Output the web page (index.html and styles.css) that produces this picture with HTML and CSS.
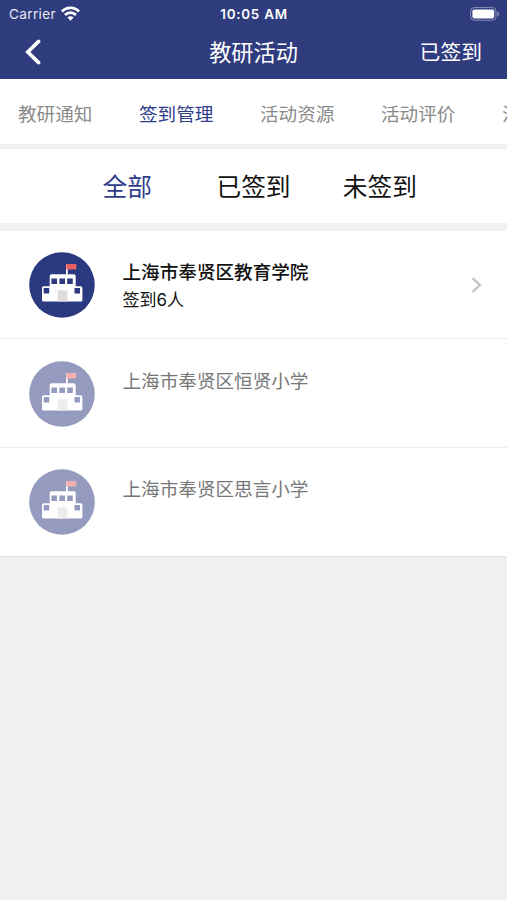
FILE: index.html
```html
<!DOCTYPE html>
<html lang="zh-CN">
<head>
<meta charset="utf-8">
<title>教研活动</title>
<link rel="stylesheet" href="styles.css">
</head>
<body>
<svg class="defs" aria-hidden="true">
  <symbol id="school" viewBox="0 0 66 66">
    <circle cx="33" cy="33" r="32.8" fill="#2b3a80"/>
    <path d="M37 12.4h1.8v10.4H37z" fill="#fff"/>
    <path d="M37.3 12h10v5.5h-10z" fill="#e8605f"/>
    <rect x="20.7" y="22.3" width="26" height="20" rx="2" fill="#fff"/>
    <rect x="13" y="34.3" width="40.4" height="15.2" rx="1.6" fill="#fff"/>
    <path d="M22.4 26.4H28V32h-5.6zM30.4 26.4H36V32h-5.6zM38.2 26.4h5.6V32h-5.6zM14.7 36h5.5v5.5h-5.5zM45.5 36H51v5.5h-5.5z" fill="#2b3a80"/>
    <rect x="28.6" y="38.3" width="9.8" height="11.2" fill="#ddd"/>
  </symbol>
</svg>
<header class="header">
  <div class="status">
    <span class="carrier">Carrier
      <svg class="wifi" width="19" height="15" viewBox="0 0 18 14" fill="none" stroke="#fff" stroke-width="2.6">
        <path d="M.9 5.1a11.5 11.5 0 0 1 16.2 0"/>
        <path d="M3.8 8.4a7.3 7.3 0 0 1 10.4 0"/>
        <path d="M9 13.8 6.1 10.9a4.1 4.1 0 0 1 5.8 0z" fill="#fff" stroke="none"/>
      </svg>
    </span>
    <span class="time">10:05 AM</span>
    <svg class="battery" width="30" height="14" viewBox="0 0 30 14">
      <rect x=".6" y=".6" width="25.4" height="12.6" rx="3.6" fill="none" stroke="#8b93bb"/>
      <rect x="2.4" y="2.4" width="21.8" height="9" rx="1.8" fill="#fff"/>
      <path d="M27.4 4.6q2 1 2 2.4t-2 2.4z" fill="#8b93bb"/>
    </svg>
  </div>
  <nav class="navbar">
    <svg class="back" width="18" height="28" viewBox="0 0 18 28" fill="none" stroke="#fff" stroke-width="3.6" stroke-linecap="round" stroke-linejoin="miter"><path d="M14.6 2.4 3.8 13l10.8 10.6"/></svg>
    <h1 class="title">教研活动</h1>
    <span class="action">已签到</span>
  </nav>
</header>
<nav class="tabs">
  <a class="tab">教研通知</a>
  <a class="tab active">签到管理</a>
  <a class="tab">活动资源</a>
  <a class="tab">活动评价</a>
  <a class="tab">活动总结</a>
</nav>
<div class="filters">
  <a class="filter active">全部</a>
  <a class="filter">已签到</a>
  <a class="filter">未签到</a>
</div>
<ul class="list">
  <li class="row signed">
    <svg class="avatar"><use href="#school"/></svg>
    <div class="info">
      <div class="name">上海市奉贤区教育学院</div>
      <div class="count">签到6人</div>
    </div>
    <svg class="chevron" width="12" height="18" viewBox="0 0 12 18" fill="none" stroke="#c4c4c6" stroke-width="2.4"><path d="m1.6 2.2 7.2 6.8-7.2 6.8"/></svg>
  </li>
  <li class="row">
    <svg class="avatar"><use href="#school"/></svg>
    <div class="info"><div class="name">上海市奉贤区恒贤小学</div></div>
  </li>
  <li class="row">
    <svg class="avatar"><use href="#school"/></svg>
    <div class="info"><div class="name">上海市奉贤区思言小学</div></div>
  </li>
</ul>
</body>
</html>
```
FILE: styles.css
```css
* { box-sizing: border-box; }

body {
  margin: 0;
  min-height: 100vh;
  overflow: hidden;
  background: #f0f0f0;
  color: #111;
  font-family: Inter, "Noto Sans CJK SC", sans-serif;
}

.defs { display: none; }

.header {
  height: 79px;
  background: #2f3c7e;
  color: #fff;
}

.status {
  display: grid;
  grid-template-columns: 1fr auto 1fr;
  align-items: center;
  height: 27px;
  padding: 0 7px 0 8px;
  font-size: 13.6px;
}

.carrier {
  display: flex;
  align-items: center;
  gap: 5px;
  padding-left: 1px;
  letter-spacing: .35px;
  color: #e6e8f2;
}

.time { font-weight: 600; font-size: 13.4px; letter-spacing: .75px; }

.battery { justify-self: end; }

.navbar {
  display: grid;
  grid-template-columns: 1fr auto 1fr;
  align-items: center;
  height: 51px;
  padding: 0 25px 0 24px;
}

.title {
  margin: 0;
  padding: 1px 0 0 1px;
  font-size: 22.2px;
  font-weight: 400;
  line-height: 32px;
}

.action {
  justify-self: end;
  padding-top: 1px;
  font-size: 20.8px;
  line-height: 32px;
}

.tabs {
  display: flex;
  height: 65px;
  padding-left: 18px;
  background: #fff;
  overflow: hidden;
}

.tab {
  flex: 0 0 121px;
  font-size: 18.6px;
  line-height: 71px;
  color: #8a8a8a;
}

.tab.active,
.filter.active { color: #2f3c8a; }

.filters {
  display: flex;
  height: 74px;
  margin: 5px 0 8px;
  padding: 0 64px;
  background: #fff;
}

.filter {
  flex: 1;
  text-align: center;
  font-size: 24.7px;
  line-height: 77px;
}

.list {
  margin: 0;
  padding: 0;
  list-style: none;
  background: #fff;
}

.row {
  display: flex;
  height: 109px;
  padding: 21px 24px 0 28.5px;
  border-bottom: 1px solid #ececec;
}

.row:first-child { height: 108px; }

.row:nth-child(2) { padding-top: 22px; }

.row:last-child { border-color: #e2e2e2; }

.avatar {
  flex: none;
  width: 66px;
  height: 66px;
  opacity: .5;
}

.info {
  flex: 1;
  margin-left: 28px;
  padding-top: 6px;
}

.name {
  font-size: 18.6px;
  line-height: 28px;
  color: #777;
}

.count {
  font-size: 17px;
  line-height: 29px;
}

.chevron { margin-top: 24px; }

.signed .avatar { opacity: 1; }

.signed .name {
  color: #111;
  font-weight: 500;
}
```
